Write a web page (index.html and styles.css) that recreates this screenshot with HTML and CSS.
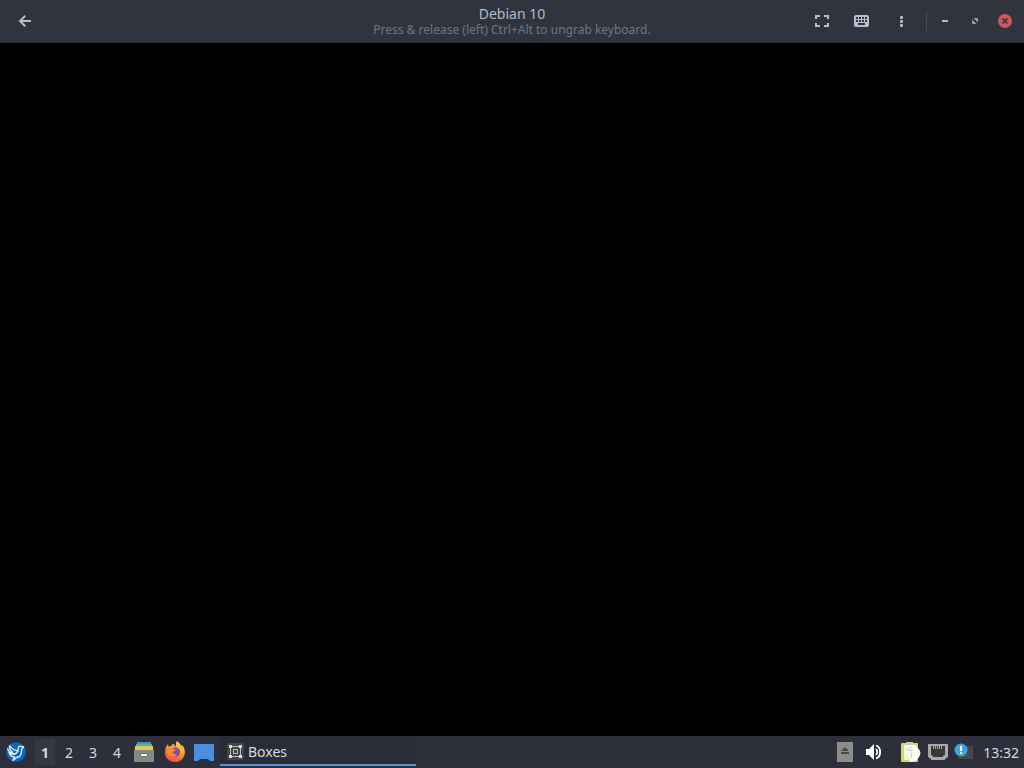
FILE: index.html
```html
<!DOCTYPE html>
<html lang="en">
<head>
<meta charset="utf-8">
<title>Debian 10</title>
<link rel="stylesheet" href="styles.css">
</head>
<body class="desktop">
<header class="titlebar">
  <div class="titlebar-start">
    <button class="tool" aria-label="Back"><svg width="16" height="16" viewBox="0 0 16 16" fill="none" stroke="currentColor" stroke-width="2"><path d="M14 8H5M8.500 3.500L4 8l4.500 4.500" stroke-linecap="square"/></svg></button>
  </div>
  <div class="titles">
    <h1 class="title">Debian 10</h1>
    <p class="subtitle">Press &amp; release (left) Ctrl+Alt to ungrab keyboard.</p>
  </div>
  <div class="titlebar-end">
    <button class="tool" aria-label="Fullscreen"><svg width="16" height="16" viewBox="0 0 16 16" fill="none" stroke="currentColor" stroke-width="2"><path d="M2 6V3h4M10 3h4v3M14 10v3h-4M6 13H2v-3"/></svg></button>
    <button class="tool" aria-label="Keyboard shortcuts"><svg width="16" height="16" viewBox="0 0 16 16"><rect x="0" y="2" width="15" height="12" rx="2" fill="currentColor"/><g fill="#2f343f"><path d="M2 4h2v2H2zM5 4h2v2H5zM8 4h2v2H8zM11 4h2v2h-2zM2 7h2v2H2zM5 7h2v2H5zM8 7h2v2H8zM11 7h2v2h-2zM4 10h7v2H4z"/></g></svg></button>
    <button class="tool" aria-label="Menu"><svg width="16" height="16" viewBox="0 0 16 16" fill="currentColor"><rect x="6" y="3" width="3" height="3" rx="1"/><rect x="6" y="7" width="3" height="3" rx="1"/><rect x="6" y="11" width="3" height="3" rx="1"/></svg></button>
    <span class="separator"></span>
    <button class="control" aria-label="Minimize"><svg width="16" height="16" viewBox="0 0 16 16" fill="currentColor"><path d="M5 7h6v2H5z"/></svg></button>
    <button class="control" aria-label="Restore"><svg width="16" height="16" viewBox="0 0 16 16" fill="currentColor" opacity=".8"><path d="M6.500 5H10q1 0 1 1v3.500zM5 6.500V10q0 1 1 1h3.500z"/></svg></button>
    <button class="control" aria-label="Close"><svg width="16" height="16" viewBox="0 0 16 16"><circle cx="8" cy="8" r="7" fill="#cc575d"/><path d="M5.500 5.500l5 5M10.500 5.500l-5 5" stroke="#2f343f" stroke-width="1.600"/></svg></button>
  </div>
</header>

<main class="screen" aria-label="Virtual machine display"></main>

<footer class="taskbar">
  <button class="start" aria-label="Application menu"><svg width="20" height="20" viewBox="0 0 20 20"><circle cx="10" cy="10" r="9.800" fill="#0768c8"/><path d="M18 5l-3-.7c-1.500-.4-2.600.5-2.700 2L12 9C8.500 8.500 5.500 6.500 3.500 3.500M1.500 6.500c1 3.500 4 5 8 5.500M12 9l-2.500 3c-2.500.8-4.500 0-6.500-1.500 1 3 3 4.300 5.500 4.500L7 18.500l3.500-3c3.500-.5 5-3 4.800-6C15.200 7 16 6 18 5M3.500 3.500c0 3 1 5.500 3.500 7" fill="none" stroke="#e4f3ff" stroke-width="1.300" stroke-linejoin="round"/></svg></button>
  <nav class="pager" aria-label="Workspaces">
    <button class="workspace workspace-active">1</button>
    <button class="workspace">2</button>
    <button class="workspace">3</button>
    <button class="workspace">4</button>
  </nav>
  <div class="launchers">
    <button class="launcher" aria-label="File manager"><svg width="22" height="22" viewBox="0 0 22 22"><path d="M4 1h14v3H4z" fill="#3f94c8"/><path d="M3 3h16v3H3z" fill="#5bb08b"/><path d="M2 5h18v5H2z" fill="#e3c566"/><path d="M1 9h20v11a1 1 0 0 1-1 1H2a1 1 0 0 1-1-1z" fill="#858988"/><rect x="7" y="12" width="8" height="4" rx="1" fill="#707473"/><path d="M8 13h6v2H8z" fill="#fff"/></svg></button>
    <button class="launcher" aria-label="Firefox"><svg width="22" height="22" viewBox="0 0 22 22"><defs><linearGradient id="flame" x1=".8" y1="0" x2=".3" y2="1"><stop offset="0" stop-color="#ffe34c"/><stop offset=".45" stop-color="#ff9633"/><stop offset="1" stop-color="#f04a45"/></linearGradient></defs><path d="M14 0c3 2 3.500 3.500 4 5l1-1c3 3 3.500 7 2.500 10-1.500 4.500-5 7-9.500 7C6 21 2 17 2 11.500 2 8 3 5 5 3l.5 2.500L8 5c1-1.500 2-2 3-2.500 0 1.500.5 2.500 2 3C12.500 3 13 1.500 14 0z" fill="url(#flame)"/><circle cx="12.500" cy="11" r="4.500" fill="#7a4fae"/><path d="M4 8c3-2 5-1 6.500 0l2.500.8c-.5 1.500-3 1.200-3.500 2.700.8 1.500 3 2.300 4.500 1-1 3.500-5.500 4-8 1.500C4.500 12.500 4 10 4 8z" fill="#ff8b2e"/></svg></button>
    <button class="launcher" aria-label="Show desktop"><svg width="22" height="22" viewBox="0 0 22 22"><path d="M1 3h20v17h-4l-2-2H7l-2 2H1z" fill="#4a8fe0"/></svg></button>
  </div>
  <button class="task">
    <svg width="18" height="18" viewBox="0 0 18 18"><rect x="1" y="1" width="17" height="17" rx="1" fill="#444"/><g fill="none" stroke="#bdbdbd"><path d="M4.500 4v11M14.500 4v11M4 4.500h11M4 14.500h11"/><path d="M7.500 7.500h4v4h-4z"/></g><path d="M3 3h3v3H3zM13 3h3v3h-3zM3 13h3v3H3zM13 13h3v3h-3z" fill="#dedede"/></svg>
    <span>Boxes</span>
  </button>
  <div class="tray">
    <button class="tray-item" aria-label="Removable media"><svg width="20" height="20" viewBox="0 0 20 20"><path d="M2 0h16v20H2z" fill="#8c8c8d"/><path d="M10 5l4 4H6zM6 10h8v2H6z" fill="#48494b"/></svg></button>
    <button class="tray-item volume" aria-label="Volume"><svg width="20" height="20" viewBox="0 0 20 20"><path d="M2 7h3l5-5v16l-5-5H2z" fill="#fff"/><path d="M12 7q2.500 3 0 6M12 3.500c5.500 2 5.500 11 0 13" fill="none" stroke="#fff" stroke-width="1.800"/></svg></button>
    <button class="tray-item clipboard" aria-label="Clipboard"><svg width="22" height="22" viewBox="0 0 22 22"><rect x="1" y="2" width="17" height="19" rx="1" fill="#d5dc45"/><path d="M4 4h12v15H4z" fill="#f3f5ed"/><path d="M6 1h7v3H6z" fill="#c6cac0"/><path d="M13 4q5 1 7.500 7.500Q20 17 15 20l-6 1 2-5-3-4z" fill="#fffef6"/><path d="M7 7l2 3M11 6l-1 4 3-1M10 12l2 1-1 4" stroke="#c8ccc2" fill="none"/></svg></button>
    <button class="tray-item" aria-label="Network"><svg width="22" height="22" viewBox="0 0 22 22"><path d="M1 3h20v13l-3 2v1H4v-1l-3-2z" fill="#aaa9a8"/><path d="M4 5h14v9l-2 1v1H6v-1l-2-1z" fill="#383936"/><path d="M6.500 5v3M8.500 5v3M10.500 5v3M12.500 5v3M14.500 5v3" stroke="#aaa991"/></svg></button>
    <button class="tray-item" aria-label="Updates"><svg width="20" height="20" viewBox="0 0 20 20"><path d="M4 4h15v13H4z" fill="#44484d"/><circle cx="7" cy="8" r="6.500" fill="#40a2dc"/><path d="M6 4h2v5H6zM6 10h2v2H6z" fill="#fff"/></svg></button>
    <time class="clock" datetime="13:32">13:32</time>
  </div>
</footer>
</body>
</html>
```
FILE: styles.css
```css
.desktop {
  margin: 0;
  min-height: 100vh;
  display: flex;
  flex-direction: column;
  background: #000;
  color: #d3dae3;
  font-family: "Noto Sans", sans-serif;
  font-size: 14px;
}

button {
  margin: 0;
  padding: 0;
  border: 0;
  background: none;
  color: inherit;
  font: inherit;
}

svg {
  display: block;
  flex: none;
}

.titlebar {
  display: grid;
  grid-template-columns: 1fr auto 1fr;
  align-items: center;
  height: 42px;
  padding: 0 4px;
  border-bottom: 1px solid #2b303a;
  background: #30343f;
  color: #b9bccb;
}

.titles {
  text-align: center;
}

.title {
  margin: 0;
  font-size: 14px;
  font-weight: 400;
  line-height: 18px;
  color: #b4b8c5;
}

.subtitle {
  margin: 0;
  font-size: 12px;
  line-height: 14px;
  color: #70747f;
}

.titlebar-end {
  display: flex;
  align-items: center;
  justify-content: flex-end;
}

.tool,
.control {
  display: flex;
  align-items: center;
  justify-content: center;
  width: 40px;
  height: 32px;
}

.control {
  width: 30px;
}

.separator {
  width: 1px;
  height: 20px;
  margin: 0 3px 0 4px;
  background: #454955;
}

.screen {
  flex: 1;
}

.taskbar {
  display: flex;
  align-items: stretch;
  height: 32px;
  background: #2d303b;
}

.start {
  display: flex;
  align-items: center;
  justify-content: center;
  width: 32px;
}

.pager {
  display: flex;
  padding-left: 1px;
}

.workspace {
  width: 24px;
  border: solid transparent;
  border-width: 3px 2px;
  background-clip: padding-box;
}

.workspace-active {
  background-color: #343843;
  font-weight: 700;
}

.launchers {
  display: flex;
}

.launcher {
  display: flex;
  align-items: center;
  justify-content: center;
  width: 30px;
}

.task {
  display: flex;
  align-items: center;
  gap: 4px;
  flex: 0 1 196px;
  margin: 0 0 2px 1px;
  padding: 2px 6px 0;
  border-bottom: 2px solid #5294e2;
  background: #282d37;
}

.tray {
  display: flex;
  align-items: center;
  gap: 5px;
  margin-left: auto;
  padding-right: 5px;
}

.volume {
  margin-left: 4px;
}

.clipboard {
  margin-left: 11px;
}

.clock {
  margin-left: 4px;
}
```
